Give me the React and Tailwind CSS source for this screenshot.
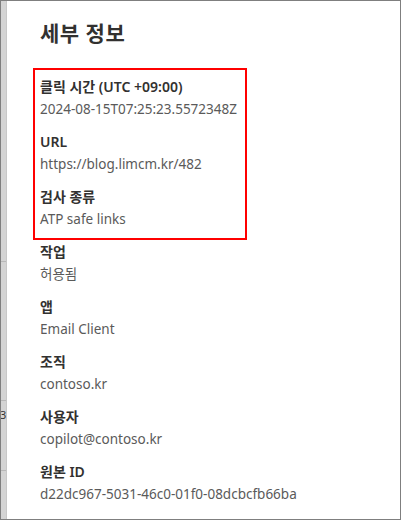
import React from 'react';

const ITEMS = [
  { label: '클릭 시간 (UTC +09:00)', value: '2024-08-15T07:25:23.5572348Z' },
  { label: 'URL', value: 'https://blog.limcm.kr/482' },
  { label: '검사 종류', value: 'ATP safe links' },
  { label: '작업', value: '허용됨' },
  { label: '앱', value: 'Email Client' },
  { label: '조직', value: 'contoso.kr' },
  { label: '사용자', value: 'copilot@contoso.kr' },
  { label: '원본 ID', value: 'd22dc967-5031-46c0-01f0-08dcbcfb66ba' },
];

const FONT = { fontFamily: '"Noto Sans", "Noto Sans CJK KR", sans-serif' };

const Field = ({ label, value }) => (
  <div className="pb-[11px]">
    <div className="text-[14px] leading-[22px] font-semibold text-[#323130]">{label}</div>
    <div className="text-[13.5px] leading-[22px] text-[#5a5a5a]">{value}</div>
  </div>
);

export default function App() {
  return (
    <div className="w-[401px] h-[520px] border border-[#7f7f7f] bg-white flex overflow-hidden" style={FONT}>
      {/* side strip of the page behind the panel */}
      <div className="w-[6px] shrink-0 bg-[#d4d4d4] border-r border-[#c8c8c8] flex flex-col overflow-hidden">
        <div className="h-[261px] shrink-0 border-b border-[#b8b8b8]" />
        <div className="h-[139px] shrink-0 border-b border-[#b8b8b8]" />
        <div className="h-[70px] shrink-0 border-b border-[#b8b8b8] relative">
          <span className="absolute left-[-1px] top-[7px] text-[11px] leading-[14px] text-[#333]">3</span>
        </div>
        <div className="flex-1" />
      </div>

      {/* details panel */}
      <div className="flex-1 pl-[33px] pt-[18px]">
        <h2 className="text-[21px] leading-[28px] font-bold text-[#323130] mb-[29px] tracking-[0.5px]">세부 정보</h2>
        <div className="relative">
          <div className="absolute left-[-7px] top-[-8px] w-[214px] h-[172px] border-2 border-[#ff0000] pointer-events-none" />
          {ITEMS.map((it) => (
            <Field key={it.label} label={it.label} value={it.value} />
          ))}
        </div>
      </div>
    </div>
  );
}
